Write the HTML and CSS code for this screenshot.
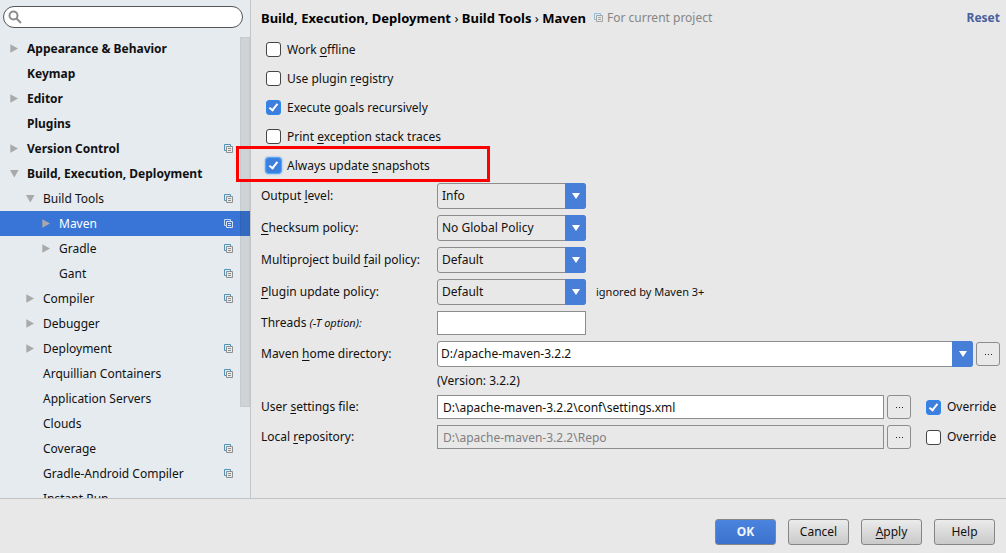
FILE: index.html
```html
<!DOCTYPE html>
<html lang="en">
<head>
<meta charset="utf-8">
<meta name="viewport" content="width=device-width, initial-scale=1">
<title>Settings - Maven</title>
<link rel="stylesheet" href="styles.css">
</head>
<body>
<svg class="defs" aria-hidden="true">
  <symbol id="right" viewBox="0 0 9 9"><path d="M0.300 0.300 8 4.500 0.300 8.700Z"/></symbol>
  <symbol id="down" viewBox="0 0 9 9"><path d="M0 1h8.600L4.300 8.400Z"/></symbol>
  <symbol id="copy" viewBox="0 0 9 9">
    <path class="back" d="M2 6.500H.5V.5h6V2"/>
    <path class="front" d="M2.500 2.500h6v6h-6zM4 4.500h3M4 6.500h3"/>
  </symbol>
</svg>
<div class="main">
  <aside class="sidebar">
    <div class="search">
      <svg viewBox="0 0 14 14" aria-hidden="true"><circle cx="5.500" cy="5.500" r="4"/><path d="M8.500 8.500 13 13"/></svg>
      <input type="search" aria-label="Search settings">
    </div>
    <nav class="tree-area">
      <ul class="tree">
        <li class="top"><svg class="arrow"><use href="#right"/></svg><span>Appearance &amp; Behavior</span></li>
        <li class="top"><i class="arrow"></i><span>Keymap</span></li>
        <li class="top"><svg class="arrow"><use href="#right"/></svg><span>Editor</span></li>
        <li class="top"><i class="arrow"></i><span>Plugins</span></li>
        <li class="top"><svg class="arrow"><use href="#right"/></svg><span>Version Control</span><svg class="copy"><use href="#copy"/></svg></li>
        <li class="top"><svg class="arrow"><use href="#down"/></svg><span>Build, Execution, Deployment</span></li>
        <li class="sub"><svg class="arrow"><use href="#down"/></svg><span>Build Tools</span><svg class="copy"><use href="#copy"/></svg></li>
        <li class="leaf selected"><svg class="arrow"><use href="#right"/></svg><span>Maven</span><svg class="copy"><use href="#copy"/></svg></li>
        <li class="leaf"><svg class="arrow"><use href="#right"/></svg><span>Gradle</span><svg class="copy"><use href="#copy"/></svg></li>
        <li class="leaf"><i class="arrow"></i><span>Gant</span><svg class="copy"><use href="#copy"/></svg></li>
        <li class="sub"><svg class="arrow"><use href="#right"/></svg><span>Compiler</span><svg class="copy"><use href="#copy"/></svg></li>
        <li class="sub"><svg class="arrow"><use href="#right"/></svg><span>Debugger</span></li>
        <li class="sub"><svg class="arrow"><use href="#right"/></svg><span>Deployment</span><svg class="copy"><use href="#copy"/></svg></li>
        <li class="sub"><i class="arrow"></i><span>Arquillian Containers</span><svg class="copy"><use href="#copy"/></svg></li>
        <li class="sub"><i class="arrow"></i><span>Application Servers</span></li>
        <li class="sub"><i class="arrow"></i><span>Clouds</span></li>
        <li class="sub"><i class="arrow"></i><span>Coverage</span><svg class="copy"><use href="#copy"/></svg></li>
        <li class="sub"><i class="arrow"></i><span>Gradle-Android Compiler</span><svg class="copy"><use href="#copy"/></svg></li>
        <li class="sub"><i class="arrow"></i><span>Instant Run</span></li>
      </ul>
      <div class="scrollbar"></div>
    </nav>
  </aside>
  <main class="content">
    <header class="header">
      <h1>Build, Execution, Deployment <span class="sep">›</span> Build Tools <span class="sep">›</span> Maven</h1>
      <div class="scope"><svg class="copy"><use href="#copy"/></svg><span>For current project</span></div>
      <a class="reset" href="#reset">Reset</a>
    </header>
    <div class="checks">
      <div class="check"><input type="checkbox" id="offline"><label for="offline">Work <u>o</u>ffline</label></div>
      <div class="check"><input type="checkbox" id="registry"><label for="registry">Use plugin <u>r</u>egistry</label></div>
      <div class="check"><input type="checkbox" id="recursive" checked><label for="recursive">Execute <u>g</u>oals recursively</label></div>
      <div class="check"><input type="checkbox" id="traces"><label for="traces">Print <u>e</u>xception stack traces</label></div>
      <div class="check marked"><input class="focused" type="checkbox" id="snapshots" checked><label for="snapshots">Always update <u>s</u>napshots</label></div>
    </div>
    <div class="form">
      <label for="output">Output <u>l</u>evel:</label>
      <div class="field"><div class="combo"><select id="output"><option>Info</option></select><span class="drop"><svg viewBox="0 0 8 6"><path d="M0 0h8L4 6Z"/></svg></span></div></div>
      <label for="checksum"><u>C</u>hecksum policy:</label>
      <div class="field"><div class="combo"><select id="checksum"><option>No Global Policy</option></select><span class="drop"><svg viewBox="0 0 8 6"><path d="M0 0h8L4 6Z"/></svg></span></div></div>
      <label for="fail">Multiproject build <u>f</u>ail policy:</label>
      <div class="field"><div class="combo"><select id="fail"><option>Default</option></select><span class="drop"><svg viewBox="0 0 8 6"><path d="M0 0h8L4 6Z"/></svg></span></div></div>
      <label for="update"><u>P</u>lugin update policy:</label>
      <div class="field"><div class="combo"><select id="update"><option>Default</option></select><span class="drop"><svg viewBox="0 0 8 6"><path d="M0 0h8L4 6Z"/></svg></span></div><span class="note">ignored by Maven 3+</span></div>
      <label for="threads">Threads <em>(-T option):</em></label>
      <div class="field"><input class="text threads" type="text" id="threads"></div>
      <label for="home">Maven <u>h</u>ome directory:</label>
      <div class="field">
        <div class="combo wide"><input type="text" id="home" value="D:/apache-maven-3.2.2"><button class="drop" type="button" aria-label="Show Maven homes"><svg viewBox="0 0 8 6"><path d="M0 0h8L4 6Z"/></svg></button></div>
        <button class="browse" type="button" aria-label="Browse Maven home"><i></i><i></i><i></i></button>
      </div>
      <p class="version">(Version: 3.2.2)</p>
      <label for="settings">User <u>s</u>ettings file:</label>
      <div class="field">
        <input class="text" type="text" id="settings" value="D:\apache-maven-3.2.2\conf\settings.xml">
        <button class="browse" type="button" aria-label="Browse settings file"><i></i><i></i><i></i></button>
        <div class="override"><input type="checkbox" id="ov1" checked><label for="ov1">Override</label></div>
      </div>
      <label for="repo">Local <u>r</u>epository:</label>
      <div class="field">
        <input class="text" type="text" id="repo" value="D:\apache-maven-3.2.2\Repo" disabled>
        <button class="browse" type="button" aria-label="Browse repository"><i></i><i></i><i></i></button>
        <div class="override"><input type="checkbox" id="ov2"><label for="ov2">Override</label></div>
      </div>
    </div>
  </main>
</div>
<footer class="footer">
  <button class="action primary" type="button">OK</button>
  <button class="action" type="button">Cancel</button>
  <button class="action" type="button"><u>A</u>pply</button>
  <button class="action" type="button">Help</button>
</footer>
</body>
</html>
```
FILE: styles.css
```css
*, *::before, *::after { box-sizing: border-box; }
body {
  margin: 0;
  height: 100vh;
  display: flex;
  flex-direction: column;
  background: #e8e8e8;
  color: #111;
  font: 12px/16px "Noto Sans", "Open Sans", sans-serif;
}
input, select, button { font: inherit; color: inherit; margin: 0; }
u { text-underline-offset: 2px; }
.defs { position: absolute; width: 0; height: 0; }
.main { flex: 1; min-height: 0; display: flex; }

/* Sidebar */
.sidebar {
  width: 251px;
  flex: none;
  display: flex;
  flex-direction: column;
  background: #e5ebef;
  border-right: 1px solid #c3c5c7;
}
.search {
  display: flex;
  align-items: center;
  gap: 4px;
  height: 22px;
  margin: 6px 7px 8px 3px;
  padding: 0 8px 0 4px;
  background: #fff;
  border: 1px solid #555;
  border-radius: 11px;
}
.search svg { width: 14px; height: 14px; flex: none; fill: none; stroke: #8c8c8c; stroke-width: 2; }
.search input { flex: 1; min-width: 0; border: 0; outline: 0; background: none; }
.tree-area { position: relative; flex: 1; min-height: 0; overflow: hidden; }
.tree { list-style: none; margin: 0; padding: 0; }
.tree li { display: flex; align-items: center; gap: 8px; height: 25px; padding-right: 17px; }
.tree span { flex: 1; white-space: nowrap; }
.tree .top { padding-left: 10px; font-weight: 700; }
.tree .sub { padding-left: 26px; }
.tree .leaf { padding-left: 42px; }
.tree .selected { background: #3875d7; color: #fff; }
.arrow { width: 9px; height: 9px; flex: none; fill: #a9a9a9; }
.copy { width: 9px; height: 9px; flex: none; fill: none; --back: #4f93bb; --front: #8f8f8f; }
.back { stroke: var(--back); }
.front { stroke: var(--front); }
.selected .copy { --back: #c3d8f5; --front: #d5e1f5; }
.scrollbar {
  position: absolute;
  top: 1px;
  right: 0;
  width: 10px;
  height: 370px;
  background: rgba(0, 0, 0, .1);
  border: 1px solid rgba(0, 0, 0, .04);
}

/* Page */
.content { flex: 1; min-width: 0; padding: 0 6px 0 10px; }
.header { display: flex; align-items: center; height: 35px; }
h1 { margin: 0; font-size: 13px; line-height: 16px; color: #000; }
.sep { font-weight: 400; }
.scope { display: flex; align-items: center; gap: 4px; margin-left: 8px; color: #868686; }
.scope .copy { --back: #8fc1dc; --front: #a5a5a5; }
.reset { margin-left: auto; color: #4a5f9e; font-weight: 700; text-decoration: none; }
.checks { padding-left: 5px; }
.check { position: relative; display: flex; align-items: center; gap: 6px; height: 29px; }
.marked::after {
  content: "";
  position: absolute;
  z-index: 1;
  left: -30px;
  top: -5px;
  width: 254px;
  height: 36px;
  border: 3px solid #f00;
  pointer-events: none;
}
input[type="checkbox"] {
  appearance: none;
  width: 15px;
  height: 15px;
  flex: none;
  background: #fff;
  border: 1px solid #444;
  border-radius: 3px;
}
input[type="checkbox"]:checked { display: grid; place-items: center; background: #3f7edb; border-color: #2f86ee; }
input[type="checkbox"]:checked::before {
  content: "";
  width: 5px;
  height: 9px;
  margin-bottom: 2px;
  border: solid #fff;
  border-width: 0 2px 2px 0;
  transform: rotate(38deg);
}
input.focused { box-shadow: 0 0 0 1px #62a3ee, 0 0 2px 1px #62a3ee; }
.form {
  display: grid;
  grid-template-columns: 170px 1fr;
  gap: 6px;
  align-items: center;
  margin-top: 3px;
}
.form label { white-space: nowrap; }
.form em { font-size: 11px; }
.field { display: flex; align-items: center; gap: 3px; min-width: 0; }
.combo { position: relative; display: flex; width: 149px; height: 26px; }
.wide { flex: 1; }
.combo select, .combo input {
  appearance: none;
  width: 100%;
  min-width: 0;
  padding: 0 24px 0 4px;
  background: #e8e8e8;
  border: 1px solid #8d8d8d;
  border-radius: 3px;
  outline: 0;
}
.combo input { padding-left: 3px; background: #fff; }
.drop {
  position: absolute;
  right: 0;
  top: 0;
  bottom: 0;
  width: 21px;
  padding: 0;
  display: grid;
  place-items: center;
  background: #477ed8;
  border: 0;
  border-radius: 0 3px 3px 0;
}
span.drop { pointer-events: none; }
.drop svg { width: 8px; height: 6px; fill: #fff; }
.note { margin-left: 7px; font-size: 11px; }
.text {
  flex: 1;
  min-width: 0;
  height: 24px;
  padding: 0 5px;
  background: #fff;
  border: 1px solid #8d8d8d;
  outline: 0;
}
.text:disabled { background: #e8e8e8; color: #808080; }
.threads { flex: none; width: 149px; }
.browse {
  display: flex;
  align-items: center;
  justify-content: center;
  gap: 2px;
  width: 24px;
  height: 24px;
  flex: none;
  padding: 0;
  background: #e9e9e9;
  border: 1px solid #8d8d8d;
  border-radius: 3px;
}
.browse i { width: 1px; height: 1px; background: #222; }
.version { grid-column: 2; margin: 0; }
.override { display: flex; align-items: center; gap: 6px; width: 74px; margin-left: 12px; }

/* Dialog buttons */
.footer {
  flex: none;
  display: flex;
  justify-content: flex-end;
  gap: 12px;
  padding: 20px 11px 8px;
  border-top: 1px solid #c3c3c3;
}
.action {
  width: 61px;
  height: 26px;
  padding: 0;
  background: linear-gradient(#ebebeb, #c9c9c9);
  border: 1px solid #858585;
  border-radius: 3px;
}
.primary { background: linear-gradient(#4a84de, #3c72cd); color: #f0f4fb; font-weight: 700; }
```
